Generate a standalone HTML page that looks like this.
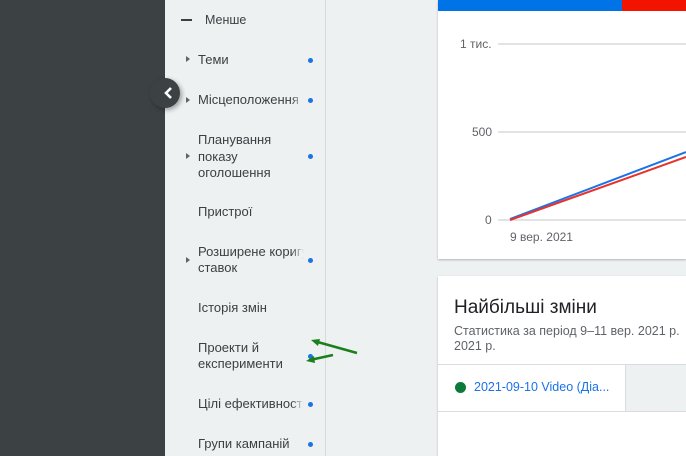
<!DOCTYPE html>
<html><head><meta charset="utf-8"><style>
*{margin:0;padding:0;box-sizing:border-box}
body{width:686px;height:456px;overflow:hidden;position:relative;background:#eef1f2;font-family:"Liberation Sans",sans-serif;color:#3c4043}
.dark{position:absolute;left:0;top:0;width:165px;height:456px;background:#3c4144}
.side{position:absolute;left:165px;top:0;width:161px;height:456px;background:#eef1f2;border-right:1px solid #d6dadc}
.it{position:absolute;left:198px;font-size:13px;line-height:16px;color:#3c4043;white-space:nowrap;overflow:hidden;width:106px;-webkit-mask-image:linear-gradient(to right,#000 88%,transparent);mask-image:linear-gradient(to right,#000 88%,transparent)}
.dot{position:absolute;left:308px;width:5px;height:5px;border-radius:50%;background:#1a73e8}
.tri{position:absolute;left:186px;width:0;height:0;border-left:4px solid #5f6368;border-top:3px solid transparent;border-bottom:3px solid transparent}
.card{position:absolute;left:438px;background:#fff;box-shadow:0 1px 2px rgba(0,0,0,.25)}
.ax{position:absolute;font-size:12px;color:#5f6368}
</style></head><body>
<div class="dark"></div>
<div class="side"></div>
<div style="position:absolute;left:150px;top:78px;width:30px;height:30px;border-radius:50%;background:#3c4144;box-shadow:2px 2px 5px rgba(0,0,0,.35)"></div>
<svg style="position:absolute;left:162px;top:86px" width="12" height="14"><path d="M9 2 L4 7 L9 12" stroke="#fff" stroke-width="2.6" fill="none"/></svg>
<div style="position:absolute;left:181px;top:19px;width:11px;height:2px;background:#3c4043"></div>
<div class="it" style="left:205px;top:12px;font-size:12.5px">Менше</div>
<div class="tri" style="top:56px"></div><div class="it" style="top:52px">Теми</div><div class="dot" style="top:58px"></div>
<div class="tri" style="top:97px"></div><div class="it" style="top:92px">Місцеположення</div><div class="dot" style="top:98px"></div>
<div class="tri" style="top:153px"></div><div class="it" style="top:132px;line-height:16.5px">Планування<br>показу<br>оголошення</div><div class="dot" style="top:154px"></div>
<div class="it" style="top:204px">Пристрої</div>
<div class="tri" style="top:257px"></div><div class="it" style="top:244px">Розширене коригування<br>ставок</div><div class="dot" style="top:258px"></div>
<div class="it" style="top:300px">Історія змін</div>
<div class="it" style="top:340px">Проекти й<br>експерименти</div><div class="dot" style="top:354px"></div>
<div class="it" style="top:396px">Цілі ефективності</div><div class="dot" style="top:402px"></div>
<div class="it" style="top:436px">Групи кампаній</div><div class="dot" style="top:442px"></div>
<svg style="position:absolute;left:300px;top:335px" width="65" height="35"><path d="M57 18 L14 6" stroke="#1b7f1b" stroke-width="2.5"/><path d="M11 5 L20 4 L18 11Z" fill="#1b7f1b"/><path d="M33 20 L10 25" stroke="#1b7f1b" stroke-width="2.5"/><path d="M6 26 L14 21 L15 28Z" fill="#1b7f1b"/></svg>
<div class="card" style="top:0;width:248px;height:259px">
<div style="position:absolute;left:0;top:0;width:184px;height:11px;background:#0073e6"></div>
<div style="position:absolute;left:184px;top:0;width:64px;height:11px;background:#f21300"></div>
</div>
<svg style="position:absolute;left:438px;top:0" width="248" height="259">
<g stroke="#e3e3e3" stroke-width="2"><line x1="60" y1="44" x2="248" y2="44"/><line x1="60" y1="132" x2="248" y2="132"/><line x1="60" y1="220" x2="248" y2="220"/></g>
<line x1="72" y1="219" x2="248" y2="152" stroke="#1a73e8" stroke-width="2"/>
<line x1="72" y1="220" x2="248" y2="157" stroke="#e8322b" stroke-width="2"/>
</svg>
<div class="ax" style="left:460px;top:37px">1 тис.</div>
<div class="ax" style="left:472px;top:125px">500</div>
<div class="ax" style="left:485px;top:213px">0</div>
<div class="ax" style="left:510px;top:230px">9 вер. 2021</div>
<div class="card" style="top:276px;width:248px;height:180px">
<div style="position:absolute;left:16px;top:21px;font-size:19px;color:#202124;white-space:nowrap">Найбільші зміни</div>
<div style="position:absolute;left:16px;top:48px;font-size:12.5px;line-height:15px;color:#5f6368;white-space:nowrap">Статистика за період 9–11 вер. 2021 р.<br>2021 р.</div>
<div style="position:absolute;left:0;top:88px;width:248px;height:1px;background:#dadce0"></div>
<div style="position:absolute;left:187px;top:89px;width:61px;height:46px;background:#eef1f2;border-left:1px solid #dadce0"></div>
<div style="position:absolute;left:0;top:135px;width:248px;height:1px;background:#dadce0"></div>
<div style="position:absolute;left:17px;top:106px;width:11px;height:11px;border-radius:50%;background:#0b7a3b"></div>
<div style="position:absolute;left:36px;top:104px;font-size:12.5px;color:#1a73e8;white-space:nowrap">2021-09-10 Video (Діа...</div>
</div>
</body></html>
